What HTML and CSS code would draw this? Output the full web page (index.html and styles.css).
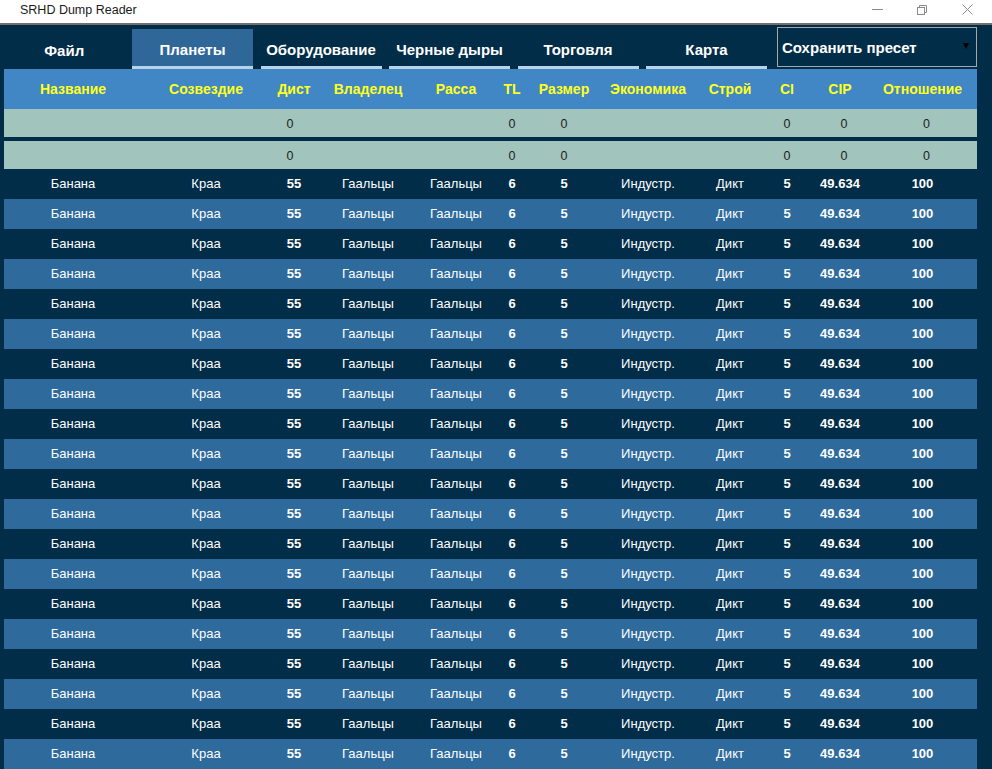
FILE: index.html
```html
<!DOCTYPE html>
<html lang="ru">
<head>
<meta charset="utf-8">
<title>SRHD Dump Reader</title>
<link rel="stylesheet" href="styles.css">
</head>
<body>
<div class="titlebar">
  <span class="title">SRHD Dump Reader</span>
  <div class="controls">
    <svg class="ctl" width="46" height="22" viewBox="0 0 46 22"><line x1="18" y1="9.5" x2="29" y2="9.5" stroke="#8a8a8a" stroke-width="1"/></svg>
    <svg class="ctl" width="46" height="22" viewBox="0 0 46 22"><rect x="17.5" y="7.5" width="7" height="7" fill="none" stroke="#8a8a8a"/><path d="M19.5 7.5 V5.5 H26.5 V12.5 H24.5" fill="none" stroke="#8a8a8a"/></svg>
    <svg class="ctl" width="46" height="22" viewBox="0 0 46 22"><path d="M16.5 4.5 L26.5 14.5 M26.5 4.5 L16.5 14.5" stroke="#8a8a8a" stroke-width="1"/></svg>
  </div>
</div>
<div class="app">
  <div class="toolbar">
    <div class="menu">Файл</div>
    <div class="tab active">Планеты</div>
    <div class="tab">Оборудование</div>
    <div class="tab">Черные дыры</div>
    <div class="tab">Торговля</div>
    <div class="tab">Карта</div>
    <div class="preset">Сохранить пресет<span class="arrow"></span></div>
  </div>
  <div class="grid">
    <div class="row head">
      <div>Название</div><div>Созвездие</div><div>Дист</div><div>Владелец</div><div>Расса</div><div>TL</div><div>Размер</div><div>Экономика</div><div>Строй</div><div>CI</div><div>CIP</div><div>Отношение</div>
    </div>
    <div class="row agg">
      <div></div><div></div><div class="sl">0</div><div></div><div></div><div>0</div><div>0</div><div></div><div></div><div>0</div><div class="sr">0</div><div class="sr">0</div>
    </div>
    <div class="row agg">
      <div></div><div></div><div class="sl">0</div><div></div><div></div><div>0</div><div>0</div><div></div><div></div><div>0</div><div class="sr">0</div><div class="sr">0</div>
    </div>
    <div id="rows"></div>
  </div>
</div>
<script src="script.js"></script>
</body>
</html>
```
FILE: styles.css
```css
* { box-sizing: border-box; }
html, body { margin: 0; padding: 0; }
body {
  width: 992px;
  height: 769px;
  overflow: hidden;
  background: #022d49;
  font-family: "Liberation Sans", Arial, sans-serif;
}
.titlebar {
  height: 25px;
  background: #fff;
  border-bottom: 2px solid #707070;
  display: flex;
  align-items: flex-start;
  justify-content: space-between;
}
.title {
  font-family: "Liberation Sans", Arial, sans-serif;
  font-size: 12.5px;
  color: #1a1a1a;
  padding-left: 20px;
  line-height: 21px;
}
.controls { display: flex; }
.ctl { display: block; }
.app {
  padding: 0 15px 0 4px;
}
.toolbar {
  display: flex;
  align-items: flex-start;
  height: 44px;
  gap: 7.5px;
}
.menu {
  width: 120.5px;
  height: 40px;
  margin-top: 4px;
  color: #fff;
  font-weight: bold;
  font-size: 15px;
  display: flex;
  align-items: center;
  justify-content: center;
  padding-top: 2px;
}
.tab {
  width: 121px;
  height: 40px;
  margin-top: 4px;
  color: #fff;
  font-weight: bold;
  font-size: 15px;
  display: flex;
  align-items: center;
  justify-content: center;
  padding-top: 3px;
  border-bottom: 3px solid #b6d3ea;
}
.tab.active { background: #2f6898; }
.preset {
  margin-left: 2.5px;
  margin-top: 2px;
  width: 200px;
  height: 40px;
  border: 1px solid #a6a6a6;
  color: #fff;
  font-weight: bold;
  font-size: 15px;
  display: flex;
  align-items: center;
  padding-left: 4px;
  position: relative;
}
.arrow {
  position: absolute;
  right: 7px;
  top: 15px;
  width: 0;
  height: 0;
  border-left: 3.5px solid transparent;
  border-right: 3.5px solid transparent;
  border-top: 6px solid #000;
}
.grid { width: 973px; }
.row {
  display: grid;
  grid-template-columns: 138px 128px 48px 100px 76px 36px 68px 100px 64px 50px 56px 109px;
  height: 30px;
  align-items: center;
  text-align: center;
  color: #fff;
  font-size: 13px;
}
.row.data { padding-bottom: 2px; }
.row.head {
  height: 40px;
  background: #4187c5;
  color: #ffff1e;
  font-weight: bold;
  font-size: 14px;
}
.row.agg {
  height: 28px;
  background: #a1c4bd;
  color: #222;
  font-size: 12.5px;
  padding-top: 1px;
}
.row.agg + .row.agg { margin-top: 4px; }
.sl { padding-right: 8px; }
.sr { padding-left: 8px; }
.row.data:nth-child(even) { background: #2e6a9c; }
.b { font-weight: bold; }
```
FILE: script.js
```js
var host = document.getElementById('rows');
var cells = [
  ['Банана', ''], ['Краа', ''], ['55', 'b'], ['Гаальцы', ''], ['Гаальцы', ''],
  ['6', 'b'], ['5', 'b'], ['Индустр.', ''], ['Дикт', ''], ['5', 'b'], ['49.634', 'b'], ['100', 'b']
];
for (var i = 0; i < 20; i++) {
  var row = document.createElement('div');
  row.className = 'row data';
  cells.forEach(function (c) {
    var d = document.createElement('div');
    d.textContent = c[0];
    if (c[1]) d.className = c[1];
    row.appendChild(d);
  });
  host.appendChild(row);
}
```
